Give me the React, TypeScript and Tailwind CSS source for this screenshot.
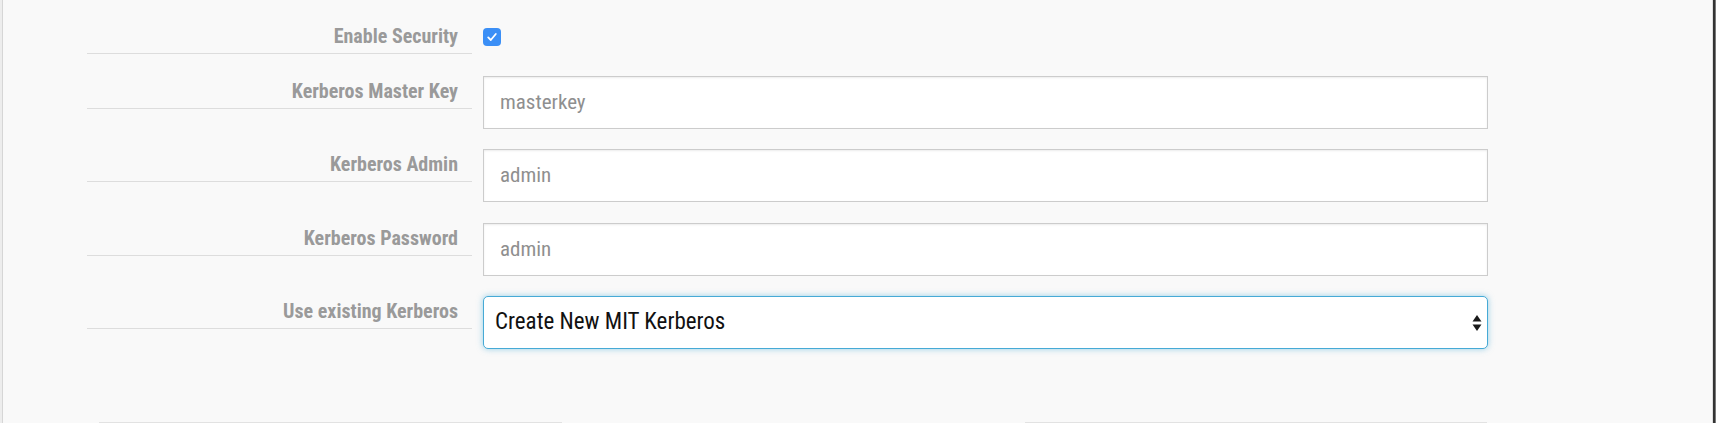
import React from "react";

const fields = [
  { label: "Kerberos Master Key", value: "masterkey", mt: "mt-[22px]" },
  { label: "Kerberos Admin", value: "admin", mt: "mt-[20px]" },
  { label: "Kerberos Password", value: "admin", mt: "mt-[21px]" },
];

const Label = ({ text }: { text: string }) => (
  <div className="w-[385px] shrink-0 border-b border-[#dddddd] pt-[3px] pb-[4px] pr-[14px] text-right">
    <span className="font-['Roboto',sans-serif] text-[20px] leading-[24px] font-bold text-[#9a9a9a] [font-stretch:condensed]">
      {text}
    </span>
  </div>
);

const App = () => {
  return (
    <div className="flex h-[423px] w-[1716px] overflow-hidden bg-[#f9f9f9]">
      <div className="w-[2px] shrink-0 bg-[#ededed]" />
      <div className="w-px shrink-0 bg-[#d6d6d6]" />
      <div className="flex w-[1709px] shrink-0 flex-col pl-[84px] pt-[21px]">
        <div className="flex items-start">
          <Label text="Enable Security" />
          <div className="ml-[11px] mt-[7px] flex h-[18px] w-[18px] items-center justify-center rounded-[4px] bg-[#3b8ff6]">
            <svg width="12" height="12" viewBox="0 0 12 12" fill="none">
              <path d="M2.2 6.4 L4.8 9 L9.8 3" stroke="white" strokeWidth="1.8" strokeLinecap="round" strokeLinejoin="round" />
            </svg>
          </div>
        </div>

        {fields.map((f) => (
          <div key={f.label} className={`flex items-start ${f.mt}`}>
            <Label text={f.label} />
            <div className="ml-[11px] flex h-[53px] w-[1005px] items-center border border-[#cccccc] bg-white pl-[16px] shadow-[inset_0_1px_2px_rgba(0,0,0,0.08)]">
              <span className="font-['Roboto',sans-serif] text-[21px] text-[#8f8f8f] [font-stretch:condensed]">
                {f.value}
              </span>
            </div>
          </div>
        ))}

        <div className="mt-[20px] flex items-start">
          <Label text="Use existing Kerberos" />
          <div className="ml-[11px] flex h-[53px] w-[1005px] items-center justify-between rounded-[5px] border border-[#46aad6] bg-white pl-[11px] pr-[5px] shadow-[0_0_6px_rgba(70,170,214,0.55)]">
            <span className="font-['Roboto',sans-serif] text-[23px] text-[#111111] [font-stretch:condensed]">
              Create New MIT Kerberos
            </span>
            <svg width="10" height="20" viewBox="0 0 10 20">
              <path d="M5 2 L9.5 8.5 L0.5 8.5 Z" fill="#1a1a1a" />
              <path d="M0.5 11.5 L9.5 11.5 L5 18 Z" fill="#1a1a1a" />
            </svg>
          </div>
        </div>

        <div className="mt-[73px] flex">
          <div className="ml-[12px] h-[4px] w-[463px] border-t border-[#e2e2e2] bg-[#c8c8c8]" />
          <div className="ml-[463px] h-[4px] w-[462px] border-t border-[#e2e2e2] bg-[#c8c8c8]" />
        </div>
      </div>
      <div className="w-px shrink-0 bg-[#dedede]" />
      <div className="w-[2px] shrink-0 bg-[#333333]" />
      <div className="w-px shrink-0 bg-[#7a7a7a]" />
    </div>
  );
};

export default App;
